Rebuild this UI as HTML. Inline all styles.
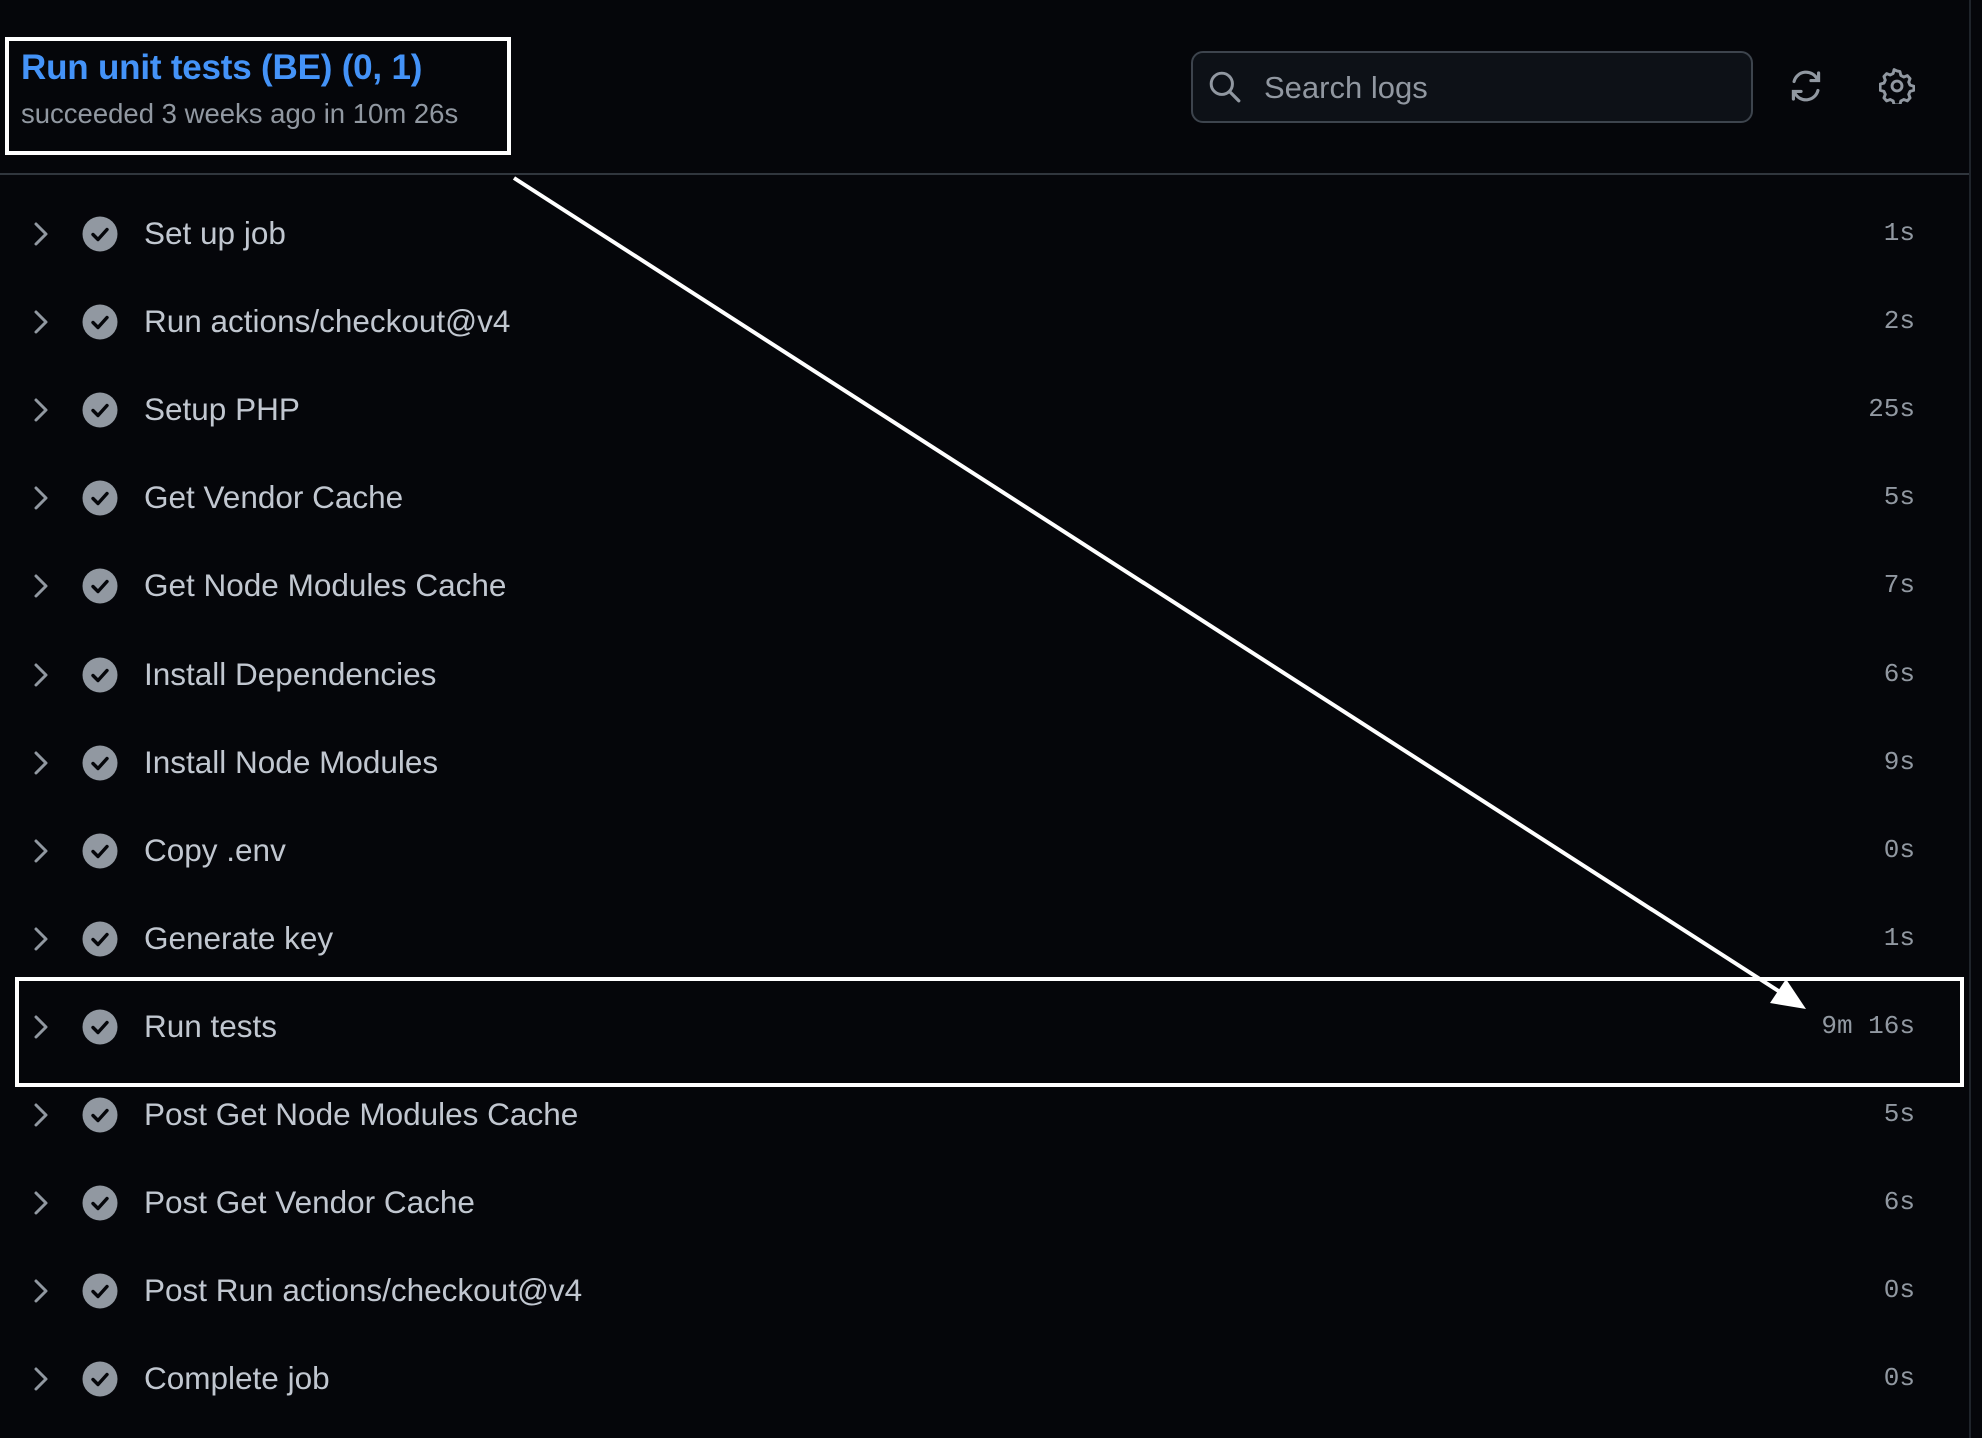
<!DOCTYPE html>
<html><head><meta charset="utf-8"><style>
*{margin:0;padding:0;box-sizing:border-box}
html,body{width:1982px;height:1438px;background:#05060a;overflow:hidden;font-family:"Liberation Sans",sans-serif}
.abs{position:absolute}
.title{left:21px;top:48px;font-size:35px;font-weight:bold;color:#4493f8;white-space:nowrap;letter-spacing:-0.2px}
.sub{left:21px;top:98px;font-size:27.5px;color:#9198a1;white-space:nowrap}
.hbox{left:5px;top:37px;width:506px;height:118px;border:4px solid #fff}
.sep{left:0;top:173px;width:1970px;height:2px;background:#30363d}
.vsep{left:1969px;top:0;width:2px;height:1438px;background:#1f242b}
.search{left:1191px;top:51px;width:562px;height:72px;border:2px solid #3d444d;border-radius:12px;background:#0d1117}
.stext{left:1264px;top:70px;font-size:31px;color:#9198a1}
.row{position:absolute;left:0;width:1960px;height:88px}
.row .name{position:absolute;left:144px;top:25px;font-size:31.5px;color:#c1c7d0;white-space:nowrap}
.row .dur{position:absolute;right:45px;top:28px;font-family:"Liberation Mono",monospace;font-size:26px;color:#9198a1}
.row svg{position:absolute}
.hl{left:15px;top:977px;width:1949px;height:110px;border:4px solid #fff}
</style></head><body>
<div class="abs hbox"></div>
<div class="abs title">Run unit tests (BE) (0, 1)</div>
<div class="abs sub">succeeded 3 weeks ago in 10m 26s</div>
<div class="abs sep"></div>
<div class="abs vsep"></div>
<div class="abs search"></div>
<svg class="abs" style="left:1208px;top:70px" width="34" height="34" viewBox="0 0 16 16"><circle cx="6.5" cy="6.5" r="5" fill="none" stroke="#9198a1" stroke-width="1.4"/><path d="M10.2 10.2L14.5 14.5" stroke="#9198a1" stroke-width="1.5" stroke-linecap="round"/></svg>
<div class="abs stext">Search logs</div>
<svg class="abs" style="left:1788px;top:68px" width="36" height="36" viewBox="0 0 16 16" fill="none" stroke="#9198a1" stroke-width="1.4" stroke-linecap="round"><path d="M2.7 6A5.5 5.5 0 0 1 13 5"/><path d="M13.3 10A5.5 5.5 0 0 1 3 11"/><path d="M13.6 2.2V5.6H10.2" fill="none"/><path d="M2.4 13.8V10.4H5.8"/></svg>
<svg class="abs" style="left:1879px;top:68px" width="36" height="36" viewBox="0 0 16 16" fill="none" stroke="#9198a1" stroke-width="1.3" stroke-linejoin="round"><path d="M8 1.3l1.3.3.4 1.7 1.3.7 1.6-.6 1.2 1.3-.6 1.6.6 1.3 1.7.5v1.8l-1.7.5-.6 1.3.6 1.6-1.2 1.3-1.6-.6-1.3.7-.4 1.7H6.7l-.4-1.7-1.3-.7-1.6.6-1.2-1.3.6-1.6-.6-1.3-1.7-.5V7.2l1.7-.5.6-1.3-.6-1.6 1.2-1.3 1.6.6 1.3-.7.4-1.7z"/><circle cx="8" cy="8" r="2.2"/></svg>
<div id="rows"></div>
<div class="abs hl"></div>
<svg class="abs" style="left:0;top:0" width="1982" height="1438"><line x1="514" y1="178" x2="1780" y2="992" stroke="#fff" stroke-width="4"/><polygon points="1806,1009 1770,1003 1786,979" fill="#fff"/></svg>
<script>
var steps=[["Set up job","1s"],["Run actions/checkout@v4","2s"],["Setup PHP","25s"],["Get Vendor Cache","5s"],["Get Node Modules Cache","7s"],["Install Dependencies","6s"],["Install Node Modules","9s"],["Copy .env","0s"],["Generate key","1s"],["Run tests","9m 16s"],["Post Get Node Modules Cache","5s"],["Post Get Vendor Cache","6s"],["Post Run actions/checkout@v4","0s"],["Complete job","0s"]];
var h="";
steps.forEach(function(s,i){var top=190+i*88.1;
h+='<div class="row" style="top:'+top+'px"><svg style="left:30px;top:28px" width="22" height="32" viewBox="0 0 22 32"><path d="M6 6L16 16L6 26" fill="none" stroke="#9198a1" stroke-width="3" stroke-linecap="round" stroke-linejoin="round"/></svg><svg style="left:82px;top:26px" width="36" height="36" viewBox="0 0 36 36"><circle cx="18" cy="18" r="17.5" fill="#9198a1"/><path d="M11 18.5L16 23.5L25 13.5" fill="none" stroke="#05060a" stroke-width="3.4" stroke-linecap="round" stroke-linejoin="round"/></svg><div class="name">'+s[0]+'</div><div class="dur">'+s[1]+'</div></div>';});
document.getElementById("rows").innerHTML=h;
</script>
</body></html>
